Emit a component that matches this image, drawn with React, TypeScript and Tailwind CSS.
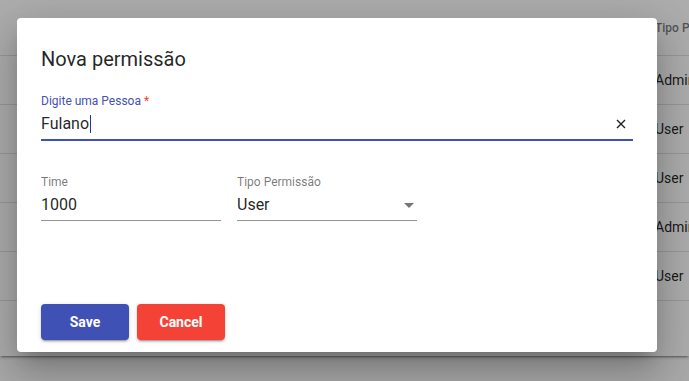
const rows = [
  { pessoa: 'Maria Silva', time: '1000', tipo: 'Admin' },
  { pessoa: 'João Souza', time: '1000', tipo: 'User' },
  { pessoa: 'Ana Costa', time: '2000', tipo: 'User' },
  { pessoa: 'Pedro Lima', time: '2000', tipo: 'Admin' },
  { pessoa: 'Carla Dias', time: '3000', tipo: 'User' },
];

function PermissionsTable() {
  return (
    <div className="bg-white shadow-[0_3px_1px_-2px_rgba(0,0,0,0.2),0_2px_2px_0_rgba(0,0,0,0.14),0_1px_5px_0_rgba(0,0,0,0.12)]">
      <div className="flex h-[56px] items-center border-b border-black/12 pl-6 text-[12px] font-medium text-black/54 whitespace-nowrap">
        <div className="w-[400px] shrink-0">Pessoa</div>
        <div className="w-[231px] shrink-0">Time</div>
        <div>Tipo Permissão</div>
      </div>
      {rows.map((r) => (
        <div key={r.pessoa} className="flex h-[49px] items-center border-b border-black/12 pl-6 text-[14px] text-black/87 whitespace-nowrap">
          <div className="w-[400px] shrink-0">{r.pessoa}</div>
          <div className="w-[231px] shrink-0">{r.time}</div>
          <div>{r.tipo}</div>
        </div>
      ))}
      <div className="h-[55px]" />
    </div>
  );
}

function Field({ label, value, width, select }: { label: string; value: string; width: string; select?: boolean }) {
  return (
    <div className={`flex flex-col ${width}`}>
      <div className="h-[16px] text-[12px] leading-[16px] text-black/54">{label}</div>
      <div className="mt-[5px] flex h-[20px] items-center justify-between text-[16px] leading-[20px] text-black/87">
        <span>{value}</span>
        {select && (
          <svg width="10" height="5" viewBox="0 0 10 5" className="mr-[3px]">
            <path d="M0 0 L5 5 L10 0 Z" fill="rgba(0,0,0,0.54)" />
          </svg>
        )}
      </div>
      <div className="mt-[5px] h-[1px] bg-black/42" />
    </div>
  );
}

function NovaPermissaoDialog() {
  return (
    <div className="absolute left-[17px] top-[18px] flex h-[334px] w-[640px] flex-col rounded-[4px] bg-white px-6 pt-[25px] pb-[12px] shadow-[0_11px_15px_-7px_rgba(0,0,0,0.2),0_24px_38px_3px_rgba(0,0,0,0.14),0_9px_46px_8px_rgba(0,0,0,0.12)]">
      <h2 className="h-[32px] text-[20px] leading-[32px] font-normal text-black/87">Nova permissão</h2>

      {/* campo pessoa (focado) */}
      <div className="mt-[18px] flex flex-col">
        <div className="h-[16px] text-[12px] leading-[16px] text-[#3f51b5]">
          Digite uma Pessoa <span className="text-[#f44336]">*</span>
        </div>
        <div className="mt-[5px] flex h-[20px] items-center justify-between text-[16px] leading-[20px] text-black/87">
          <span className="flex items-center">
            Fulano
            <span className="ml-[1px] inline-block h-[18px] w-[1px] bg-[#283593]" />
          </span>
          <svg width="10" height="10" viewBox="0 0 10 10" className="mr-[7px]">
            <path d="M1 1 L9 9 M9 1 L1 9" stroke="rgba(0,0,0,0.87)" strokeWidth="1.4" />
          </svg>
        </div>
        <div className="mt-[5px] h-[2px] bg-[#3f51b5]" />
      </div>

      <div className="mt-[33px] flex gap-4">
        <Field label="Time" value="1000" width="w-[180px]" />
        <Field label="Tipo Permissão" value="User" width="w-[180px]" select />
      </div>

      <div className="mt-auto flex gap-2">
        <button className="h-[36px] w-[88px] rounded-[4px] bg-[#3f51b5] text-[14px] font-bold text-white shadow-[0_3px_1px_-2px_rgba(0,0,0,0.2),0_2px_2px_0_rgba(0,0,0,0.14),0_1px_5px_0_rgba(0,0,0,0.12)]">
          Save
        </button>
        <button className="h-[36px] w-[88px] rounded-[4px] bg-[#f44336] text-[14px] font-bold text-white shadow-[0_3px_1px_-2px_rgba(0,0,0,0.2),0_2px_2px_0_rgba(0,0,0,0.14),0_1px_5px_0_rgba(0,0,0,0.12)]">
          Cancel
        </button>
      </div>
    </div>
  );
}

export default function App() {
  return (
    <div className="relative h-[381px] w-[689px] overflow-hidden bg-[#fafafa] font-['Roboto',sans-serif]">
      <PermissionsTable />
      {/* backdrop */}
      <div className="absolute inset-0 bg-black/32" />
      <NovaPermissaoDialog />
    </div>
  );
}
